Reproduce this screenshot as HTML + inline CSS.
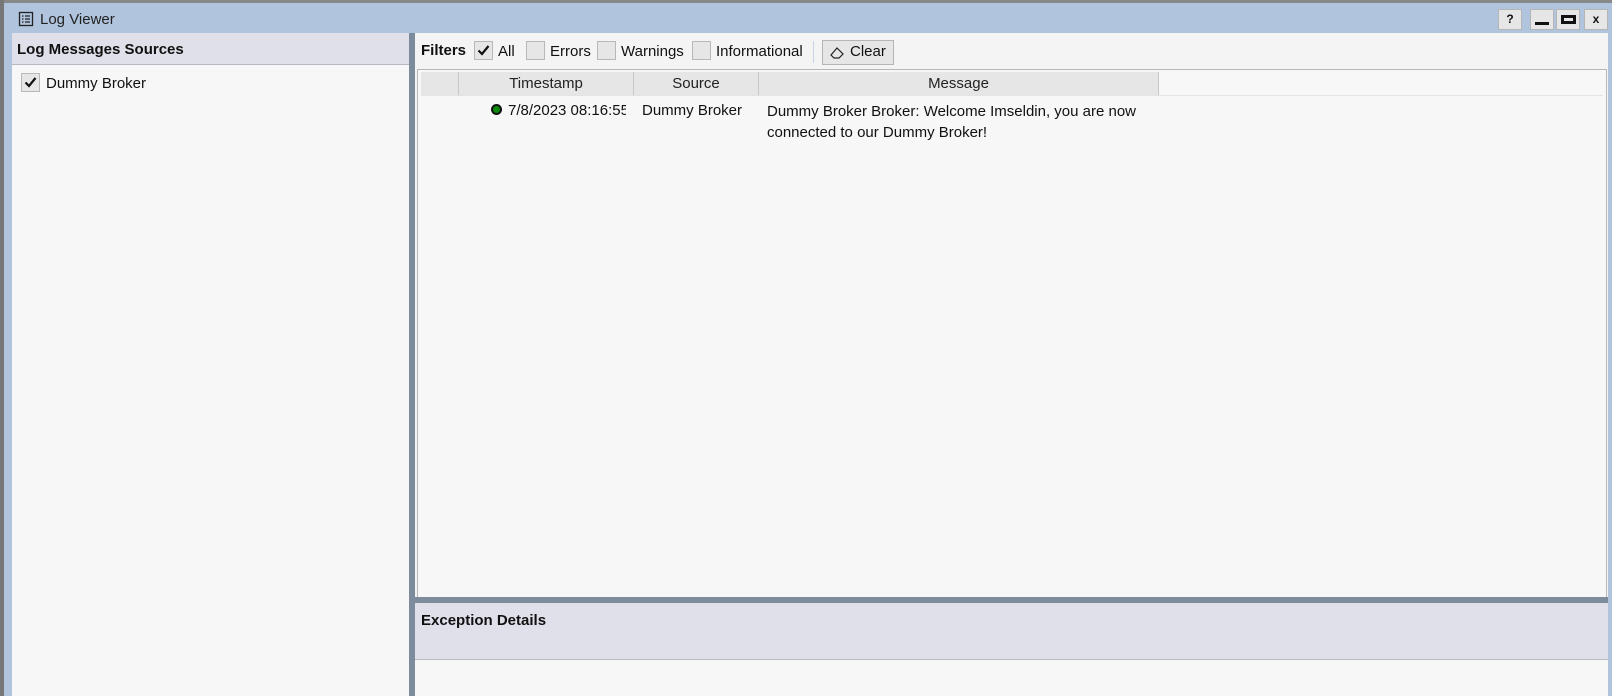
<!DOCTYPE html>
<html><head><meta charset="utf-8"><style>
*{margin:0;padding:0;box-sizing:border-box}
body{width:1612px;height:696px;overflow:hidden;background:#b0c4de;font-family:"Liberation Sans","DejaVu Sans",sans-serif;font-size:14px;color:#111;position:relative}
.a{position:absolute}
.cb{position:absolute;width:19px;height:19px;background:#e6e6e6;border:1px solid #b8b8b8}
.btn{position:absolute;top:9px;width:24px;height:21px;background:#e6e6e6;border:1px solid #b5b5b5;font-weight:bold;font-size:12px;text-align:center;line-height:19px}
.hd{position:absolute;top:72px;height:23px;background:#e6e6e6;border-right:1px solid #c8c8c8;text-align:center;line-height:23px;color:#222;font-size:15px}
</style></head><body>
<div class="a" style="left:0;top:0;width:1612px;height:3px;background:#888"></div>
<div class="a" style="left:0;top:0;width:4px;height:696px;background:#777"></div>
<svg class="a" style="left:18px;top:11px" width="16" height="16" viewBox="0 0 16 16"><rect x="1.5" y="1.5" width="13" height="13" fill="none" stroke="#222" stroke-width="1.3"/><path d="M4 5h1.5M7 5h5M4 8h1.5M7 8h5M4 11h1.5M7 11h5" stroke="#222" stroke-width="1.3"/></svg>
<div class="a" style="left:40px;top:11px;font-size:15px;color:#222">Log Viewer</div>
<div class="btn" style="left:1498px">?</div>
<div class="btn" style="left:1530px"><div class="a" style="left:4px;top:12px;width:14px;height:3px;background:#111"></div></div>
<div class="btn" style="left:1556px"><div class="a" style="left:4px;top:5px;width:15px;height:9px;border:3px solid #111"></div></div>
<div class="btn" style="left:1584px">x</div>
<div class="a" style="left:12px;top:33px;width:397px;height:663px;background:#f7f7f7"></div>
<div class="a" style="left:12px;top:33px;width:397px;height:32px;background:#e0e0ea;border-bottom:1px solid #b8b8c0"></div>
<div class="a" style="left:17px;top:41px;font-weight:bold;font-size:15px">Log Messages Sources</div>
<div class="cb" style="left:21px;top:73px"><svg width="17" height="17" viewBox="0 0 17 17"><path d="M3.5 8.5l3.5 3.5 6.5-8" fill="none" stroke="#111" stroke-width="2.2"/></svg></div>
<div class="a" style="left:46px;top:75px;font-size:15px">Dummy Broker</div>
<div class="a" style="left:409px;top:33px;width:6px;height:663px;background:#7d8c9c"></div>
<div class="a" style="left:415px;top:33px;width:1193px;height:663px;background:#f4f4f4"></div>
<div class="a" style="left:421px;top:42px;font-weight:bold;font-size:15px">Filters</div>
<div class="cb" style="left:474px;top:41px"><svg width="17" height="17" viewBox="0 0 17 17"><path d="M3.5 8.5l3.5 3.5 6.5-8" fill="none" stroke="#111" stroke-width="2.2"/></svg></div>
<div class="a" style="left:498px;top:43px;font-size:15px">All</div>
<div class="cb" style="left:526px;top:41px"></div>
<div class="a" style="left:550px;top:43px;font-size:15px">Errors</div>
<div class="cb" style="left:597px;top:41px"></div>
<div class="a" style="left:621px;top:43px;font-size:15px">Warnings</div>
<div class="cb" style="left:692px;top:41px"></div>
<div class="a" style="left:716px;top:43px;font-size:15px">Informational</div>
<div class="a" style="left:813px;top:41px;width:1px;height:22px;background:#c8d4e4"></div>
<div class="a" style="left:822px;top:40px;width:72px;height:25px;background:#e6e6e6;border:1px solid #b5b5b5"></div>
<svg class="a" style="left:829px;top:45px" width="16" height="16" viewBox="0 0 16 16"><path d="M2 10l6-7 6 6-4 4H5z" fill="none" stroke="#222" stroke-width="1.2"/></svg>
<div class="a" style="left:850px;top:43px;font-size:15px">Clear</div>
<div class="a" style="left:417px;top:69px;width:1190px;height:530px;background:#f7f7f7;border:1px solid #b8b8b8"></div>
<div class="hd" style="left:421px;width:38px"></div>
<div class="hd" style="left:459px;width:175px">Timestamp</div>
<div class="hd" style="left:634px;width:125px">Source</div>
<div class="hd" style="left:759px;width:400px">Message</div>
<div class="a" style="left:421px;top:95px;width:1182px;height:1px;background:#e4e4e4"></div>
<div class="a" style="left:491px;top:104px;width:11px;height:11px;border-radius:50%;background:#0a8a0a;border:2px solid #111"></div>
<div class="a" style="left:508px;top:102px;font-size:15px;width:118px;overflow:hidden;white-space:nowrap">7/8/2023 08:16:55.</div>
<div class="a" style="left:642px;top:102px;font-size:15px">Dummy Broker</div>
<div class="a" style="left:767px;top:101px;font-size:15px;line-height:21px">Dummy Broker Broker: Welcome Imseldin, you are now<br>connected to our Dummy Broker!</div>
<div class="a" style="left:415px;top:597px;width:1193px;height:6px;background:#7d8c9c"></div>
<div class="a" style="left:415px;top:603px;width:1193px;height:57px;background:#e0e0ea;border-bottom:1px solid #b8b8c0"></div>
<div class="a" style="left:421px;top:612px;font-weight:bold;font-size:15px">Exception Details</div>
<div class="a" style="left:415px;top:660px;width:1193px;height:36px;background:#f7f7f7"></div>
</body></html>
